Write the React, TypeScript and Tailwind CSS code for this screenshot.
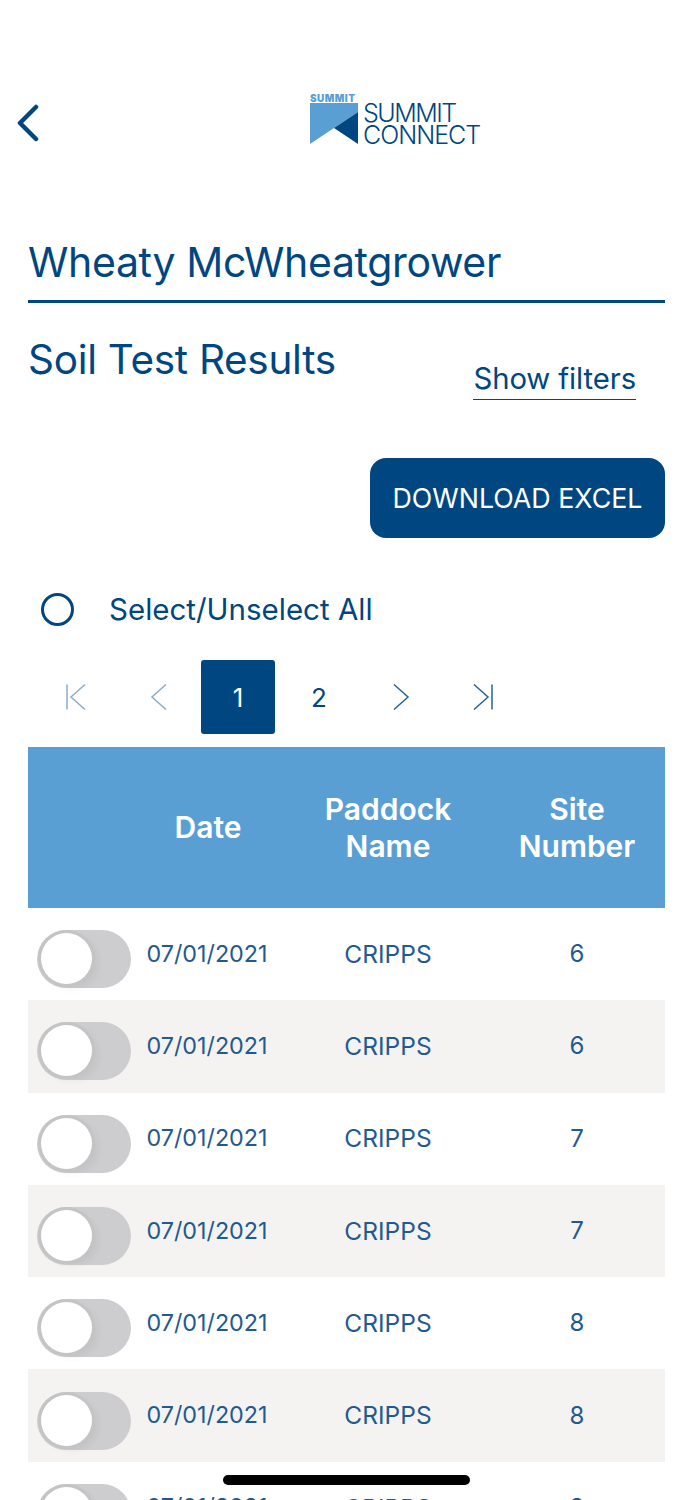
const rows = ["6", "6", "7", "7", "8", "8", "8"];

function Toggle() {
  return (
    <div className="relative h-[58px] w-[94px] rounded-full bg-[#cdcdd0]">
      <div className="absolute left-[4px] top-[3px] h-[51px] w-[51px] rounded-full bg-white shadow-[0_0_0_3px_#c4c4c4,5px_4px_8px_rgba(0,0,0,0.06)]" />
    </div>
  );
}

function Logo() {
  return (
    <div className="flex items-start gap-[5px]">
      <div className="flex w-[48px] flex-col">
        <span className="h-[8px] whitespace-nowrap text-[10px] font-black leading-[7px] tracking-[0.45px] text-[#5a9fd4]">SUMMIT</span>
        <svg width="48" height="41" viewBox="0 0 48 41" className="block">
          <path d="M0 0H48V9L24 25L0 41Z" fill="#5a9fd4" />
          <path d="M48 9V41L24 25Z" fill="#004680" />
        </svg>
      </div>
      <div className="mt-[7px] text-[25px] font-light leading-[22px] tracking-[-1px] text-[#004680]">
        <div className="tracking-[-1.5px]">SUMMIT</div>
        <div>CONNECT</div>
      </div>
    </div>
  );
}

function Pager() {
  const cls = "flex h-[74px] items-center justify-center";
  return (
    <div className="mt-[33px] flex pl-[7px] text-[#004680]">
      <div className={`${cls} w-[82px]`}>
        <svg width="24" height="28" viewBox="0 0 24 28" fill="none" stroke="#004680" strokeOpacity="0.45" strokeWidth="1.5">
          <path d="M3 1.500V26.500M21 1.500L7 14L21 26.500" />
        </svg>
      </div>
      <div className={`${cls} w-[84px]`}>
        <svg width="18" height="28" viewBox="0 0 18 28" fill="none" stroke="#004680" strokeOpacity="0.45" strokeWidth="1.5">
          <path d="M16 1.500L2 14L16 26.500" />
        </svg>
      </div>
      <div className={`${cls} w-[74px] rounded-[3px] bg-[#004680] text-[26px] text-white`}>1</div>
      <div className={`${cls} w-[88px] text-[26px]`}>2</div>
      <div className={`${cls} w-[76px]`}>
        <svg width="18" height="28" viewBox="0 0 18 28" fill="none" stroke="#004680" strokeOpacity="0.85" strokeWidth="1.5">
          <path d="M2 1.500L16 14L2 26.500" />
        </svg>
      </div>
      <div className={`${cls} w-[88px]`}>
        <svg width="24" height="28" viewBox="0 0 24 28" fill="none" stroke="#004680" strokeOpacity="0.85" strokeWidth="1.5">
          <path d="M21 1.500V26.500M3 1.500L17 14L3 26.500" />
        </svg>
      </div>
    </div>
  );
}

export default function App() {
  return (
    <div className="relative h-[1500px] w-[693px] overflow-hidden bg-white font-['Inter','Liberation_Sans',sans-serif] text-[#004680]">
      <header className="flex items-start pl-[16px] pt-[95px]">
        <svg width="24" height="38" viewBox="0 0 24 38" fill="none" stroke="#004680" strokeWidth="4.500" strokeLinecap="round" strokeLinejoin="round" className="mt-[9px]">
          <path d="M20 3L4 19L20 35" />
        </svg>
        <div className="ml-[270px]">
          <Logo />
        </div>
      </header>

      <main className="px-[28px] pt-[91px]">
        <h1 className="border-b-[3px] border-[#004680] pb-[13px] text-[41px] font-normal leading-[50px] tracking-[-0.35px]">
          Wheaty McWheatgrower
        </h1>

        <div className="mt-[32px] flex items-start justify-between">
          <h2 className="text-[40.500px] font-normal leading-[50px] tracking-[-0.3px]">Soil Test Results</h2>
          <span className="mr-[29px] mt-[24px] border-b border-[#004680] pb-[1px] text-[29.300px] leading-[39px] tracking-[-0.1px]">Show filters</span>
        </div>

        <div className="mt-[58px] flex justify-end">
          <button className="h-[80px] w-[295px] rounded-[16px] bg-[#004680] text-[26.800px] text-white">DOWNLOAD EXCEL</button>
        </div>

        <div className="mt-[53px] flex items-center pl-[13px]">
          <div className="h-[33px] w-[33px] rounded-full border-[3px] border-[#004680]" />
          <span className="ml-[35px] text-[29.500px] leading-[36px]">Select/Unselect All</span>
        </div>

        <Pager />

        <div className="mt-[13px] grid h-[161px] grid-cols-[109px_142px_218px_168px] items-center bg-[#5a9fd4] text-center text-[30px] font-semibold leading-[37px] text-white">
          <div />
          <div>Date</div>
          <div>Paddock<br />Name</div>
          <div className="pr-[8px]">Site<br />Number</div>
        </div>

        {rows.map((site, i) => (
          <div
            key={i}
            className={`grid h-[92.300px] grid-cols-[109px_142px_218px_168px] items-center text-center text-[#1f5a90] ${i % 2 === 1 ? "bg-[#f5f3f2]" : "bg-white"}`}
          >
            <div className="mt-[10px] pl-[9px]"><Toggle /></div>
            <div className="pr-[2px] text-[23.300px]">07/01/2021</div>
            <div className="text-[24.500px]">CRIPPS</div>
            <div className="pr-[8px] text-[24px]">{site}</div>
          </div>
        ))}
      </main>

      <div className="absolute bottom-[15px] left-[223px] h-[10px] w-[247px] rounded-full bg-black" />
    </div>
  );
}
